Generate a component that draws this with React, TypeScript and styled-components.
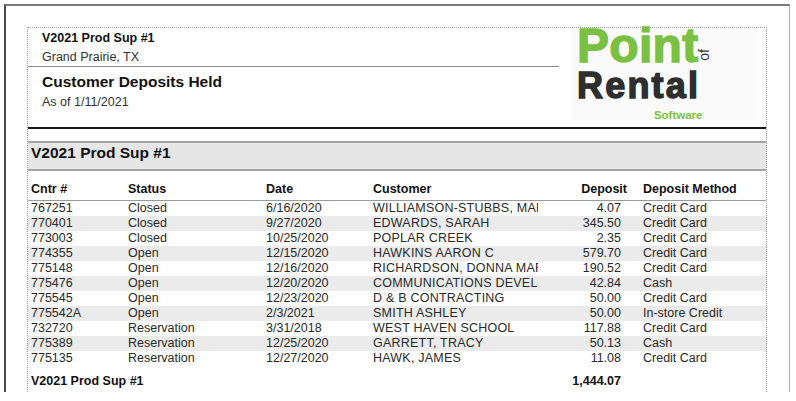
import React from 'react';
import styled, { createGlobalStyle } from 'styled-components';

const GlobalStyle = createGlobalStyle`
  html, body {
    margin: 0;
    padding: 0;
    background: #ffffff;
    font-family: 'Liberation Sans', Arial, sans-serif;
  }
`;

const Frame = styled.div`
  box-sizing: border-box;
  margin: 4px 0 0 4px;
  width: 786px;
  height: 388px;
  border-left: 2px solid #4a4a4a;
  border-top: 2px solid #7a7a7a;
  border-right: 1px solid #b0b0b0;
  padding: 21px 22px 0 21px;
  overflow: hidden;
  background: #fff;
`;

const Page = styled.div`
  border: 1px dotted #9a9a9a;
  border-bottom: none;
  min-height: 400px;
`;

/* report header */
const Header = styled.div`
  display: flex;
  height: 99px;
  border-bottom: 2px solid #1a1a1a;
`;

const HeaderLeft = styled.div`
  width: 531px;
  display: flex;
  flex-direction: column;
`;

const Company = styled.div`
  margin-top: 2px;
  padding-left: 14px;
  font-size: 12.5px;
  font-weight: bold;
  line-height: 17px;
  color: #111;
`;

const City = styled.div`
  padding: 2px 0 0 14px;
  font-size: 12.5px;
  line-height: 17px;
  color: #333;
  border-bottom: 1px solid #8a8a8a;
`;

const Title = styled.div`
  margin-top: 5px;
  padding-left: 14px;
  font-size: 15.5px;
  font-weight: bold;
  line-height: 20px;
  color: #111;
`;

const AsOf = styled.div`
  margin-top: 2px;
  padding-left: 14px;
  font-size: 12.5px;
  line-height: 16px;
  color: #333;
`;

const LogoBox = styled.div`
  margin-left: 13px;
  width: 186px;
  height: 92px;
  background: #fafafa;
  padding-left: 5px;
  box-sizing: border-box;
`;

const LogoInner = styled.div`
  display: inline-flex;
  flex-direction: column;
`;

const PointRow = styled.div`
  display: flex;
  align-items: flex-end;
  margin-top: -2px;
`;

const Point = styled.span`
  font-size: 48px;
  font-weight: bold;
  line-height: 40px;
  letter-spacing: 0.3px;
  color: #7ac143;
  -webkit-text-stroke: 1.4px #7ac143;
`;

const Of = styled.span`
  writing-mode: vertical-rl;
  transform: rotate(180deg);
  font-size: 14px;
  line-height: 9px;
  color: #333;
  margin: 0 0 5px 2px;
`;

const Rental = styled.span`
  margin-top: 5px;
  font-size: 36px;
  font-weight: bold;
  line-height: 30px;
  letter-spacing: 2.2px;
  color: #2e2e2e;
  -webkit-text-stroke: 1.4px #2e2e2e;
`;

const Software = styled.span`
  align-self: flex-end;
  margin: 7px 7px 0 0;
  font-size: 11.5px;
  font-weight: bold;
  line-height: 14px;
  color: #7ac143;
`;

/* group band */
const Band = styled.div`
  margin-top: 12px;
  height: 22px;
  background: #e6e6e6;
  border-top: 2px solid #a3a3a3;
  border-bottom: 2px solid #a3a3a3;
  padding: 0 0 4px 3px;
  font-size: 15.5px;
  font-weight: bold;
  line-height: 19px;
  color: #111;
`;

/* table */
const Grid = styled.div<{ $bold?: boolean; $shade?: boolean }>`
  display: grid;
  grid-template-columns: 97px 138px 107px 165px 83px 1fr;
  padding-left: 3px;
  font-size: 12.5px;
  font-weight: ${p => (p.$bold ? 'bold' : 'normal')};
  color: ${p => (p.$bold ? '#111' : '#2a2a2a')};
  background: ${p => (p.$shade ? '#ebebeb' : 'transparent')};
`;

const HeadRow = styled(Grid)`
  height: 30px;
  align-items: end;
  line-height: 16px;
  padding-bottom: 3px;
  box-sizing: border-box;
  border-bottom: 1px solid #9a9a9a;
`;

const DataRow = styled(Grid)`
  height: 15px;
  line-height: 15px;
`;

const TotalRow = styled(Grid)`
  margin-top: 7px;
  line-height: 17px;
`;

const Cell = styled.div<{ $right?: boolean; $pad?: number; $span?: string }>`
  white-space: nowrap;
  overflow: hidden;
  text-align: ${p => (p.$right ? 'right' : 'left')};
  padding-left: ${p => p.$pad || 0}px;
  grid-column: ${p => p.$span || 'auto'};
`;

const CustomerCell = styled(Cell)`
  letter-spacing: 0.22px;
`;

const HeadDeposit = styled(Cell)`
  overflow: visible;
  margin-right: -6px;
`;

const rows = [
  ['767251', 'Closed', '6/16/2020', 'WILLIAMSON-STUBBS, MARY', '4.07', 'Credit Card'],
  ['770401', 'Closed', '9/27/2020', 'EDWARDS, SARAH', '345.50', 'Credit Card'],
  ['773003', 'Closed', '10/25/2020', 'POPLAR CREEK', '2.35', 'Credit Card'],
  ['774355', 'Open', '12/15/2020', 'HAWKINS AARON C', '579.70', 'Credit Card'],
  ['775148', 'Open', '12/16/2020', 'RICHARDSON, DONNA MARIE', '190.52', 'Credit Card'],
  ['775476', 'Open', '12/20/2020', 'COMMUNICATIONS DEVELOPMENT', '42.84', 'Cash'],
  ['775545', 'Open', '12/23/2020', 'D & B CONTRACTING', '50.00', 'Credit Card'],
  ['775542A', 'Open', '2/3/2021', 'SMITH ASHLEY', '50.00', 'In-store Credit'],
  ['732720', 'Reservation', '3/31/2018', 'WEST HAVEN SCHOOL', '117.88', 'Credit Card'],
  ['775389', 'Reservation', '12/25/2020', 'GARRETT, TRACY', '50.13', 'Cash'],
  ['775135', 'Reservation', '12/27/2020', 'HAWK, JAMES', '11.08', 'Credit Card'],
];

const App = () => {
  return (
    <>
      <GlobalStyle />
      <Frame>
        <Page>
          <Header>
            <HeaderLeft>
              <Company>V2021 Prod Sup #1</Company>
              <City>Grand Prairie, TX</City>
              <Title>Customer Deposits Held</Title>
              <AsOf>As of 1/11/2021</AsOf>
            </HeaderLeft>
            <LogoBox>
              <LogoInner>
                <PointRow>
                  <Point>Point</Point>
                  <Of>of</Of>
                </PointRow>
                <Rental>Rental</Rental>
                <Software>Software</Software>
              </LogoInner>
            </LogoBox>
          </Header>

          <Band>V2021 Prod Sup #1</Band>

          <HeadRow $bold>
            <Cell>Cntr #</Cell>
            <Cell>Status</Cell>
            <Cell>Date</Cell>
            <Cell>Customer</Cell>
            <HeadDeposit $right>Deposit</HeadDeposit>
            <Cell $pad={22}>Deposit Method</Cell>
          </HeadRow>

          {rows.map((r, i) => (
            <DataRow key={i} $shade={i % 2 === 1}>
              <Cell>{r[0]}</Cell>
              <Cell>{r[1]}</Cell>
              <Cell>{r[2]}</Cell>
              <CustomerCell>{r[3]}</CustomerCell>
              <Cell $right>{r[4]}</Cell>
              <Cell $pad={22}>{r[5]}</Cell>
            </DataRow>
          ))}

          <TotalRow $bold>
            <Cell $span="1 / 5">V2021 Prod Sup #1</Cell>
            <Cell $right>1,444.07</Cell>
          </TotalRow>
        </Page>
      </Frame>
    </>
  );
};

export default App;
